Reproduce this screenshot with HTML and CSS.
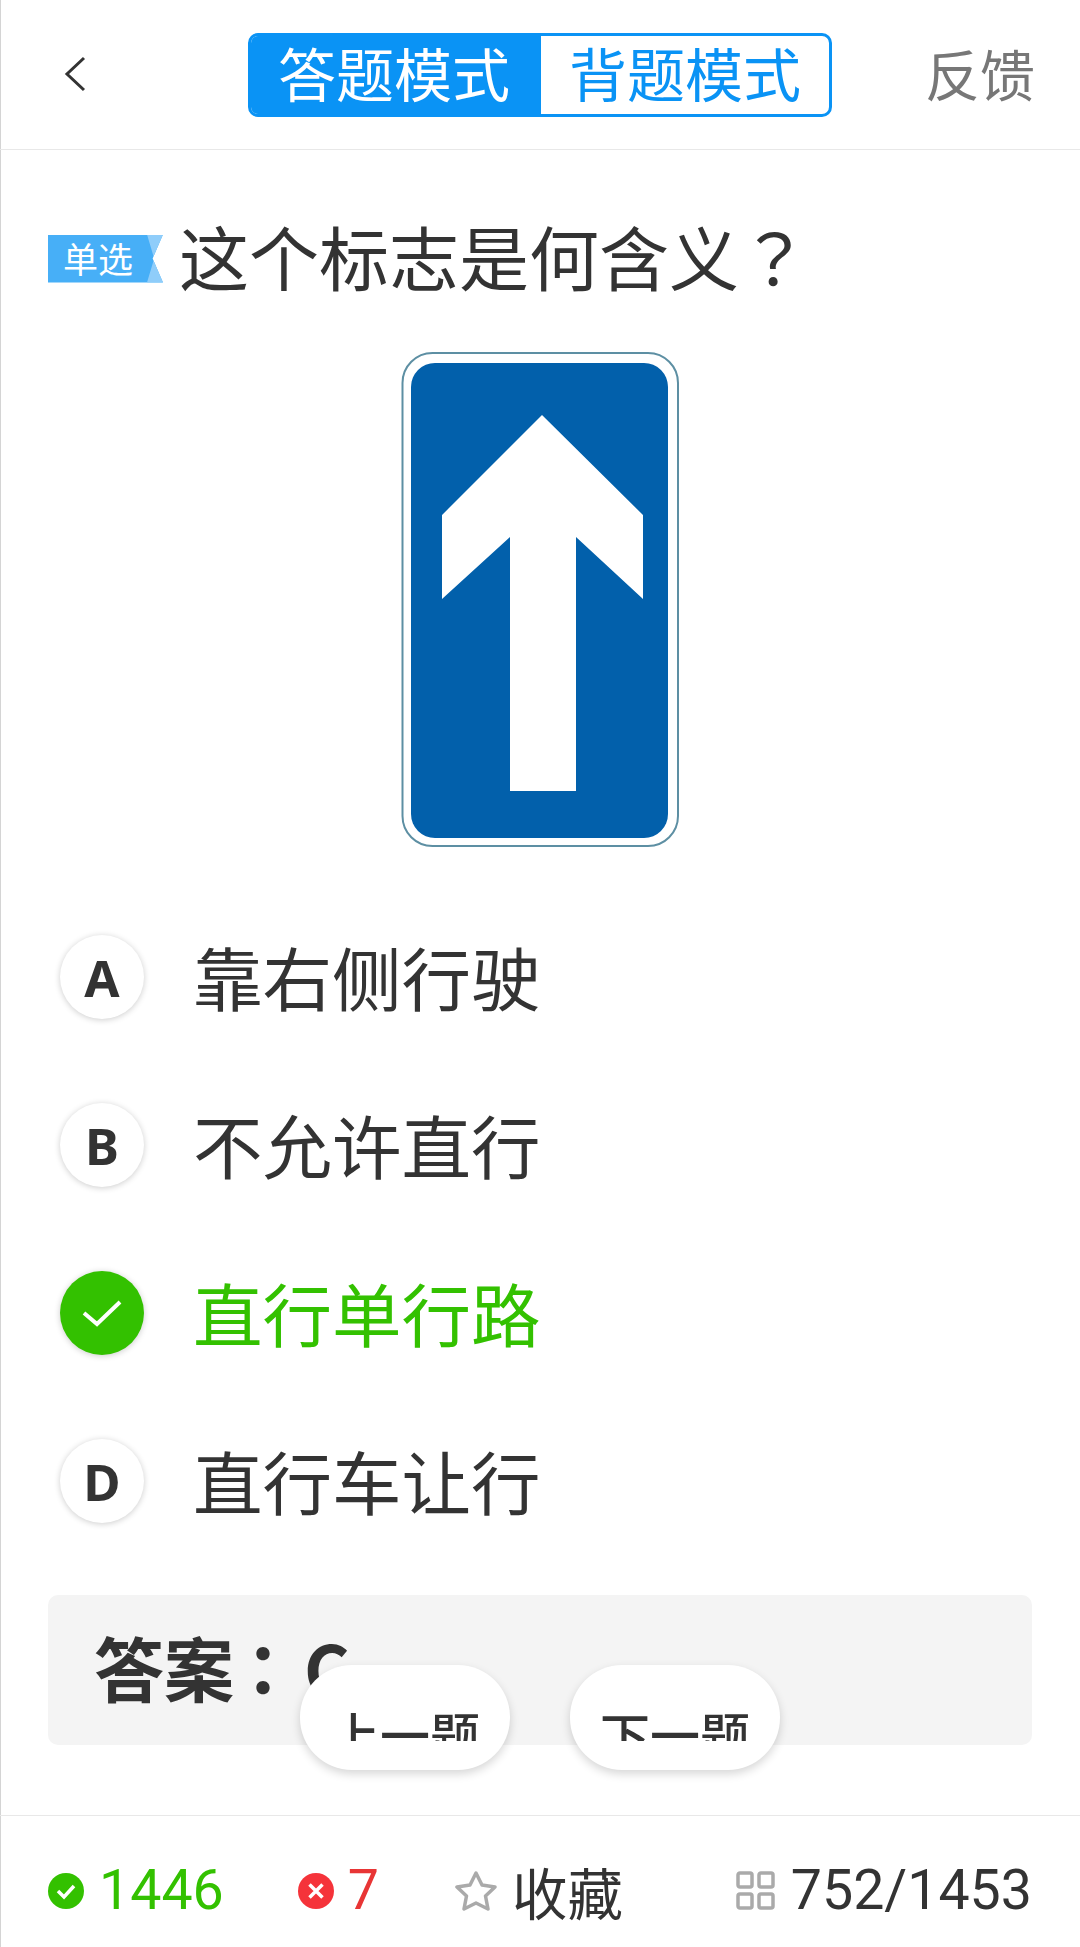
FILE: index.html
```html
<!DOCTYPE html>
<html lang="zh-CN">
<head>
    <meta charset="UTF-8">
    <meta name="viewport" content="width=device-width, initial-scale=1.0">
    <title>答题模式</title>
    <link rel="stylesheet" href="styles.css">
</head>
<body>
    <div class="page">
        <div class="topbar">
            <svg class="back" width="22" height="36" viewBox="0 0 22 36"><path d="M20 2 L3 18 L20 34" fill="none" stroke="#333" stroke-width="3"/></svg>
            <div class="modes">
                <div class="mode mode-on">答题模式</div>
                <div class="mode">背题模式</div>
            </div>
            <div class="feedback">反馈</div>
        </div>

        <div class="question">
            <span class="tag">单选</span>
            <span class="question-text">这个标志是何含义<span class="punct" lang="zh-TW">？</span></span>
        </div>

        <svg class="sign" width="290" height="510" viewBox="0 0 290 510">
            <rect x="7.5" y="8" width="275.5" height="493" rx="30" fill="#fff" stroke="#5d8fa3" stroke-width="2"/>
            <rect x="16" y="18" width="257" height="475" rx="24" fill="#0260ab"/>
            <path d="M147 70 L248 170 L248 254 L181 192 L181 446 L115 446 L115 192 L47 254 L47 170 Z" fill="#fff"/>
        </svg>

        <div class="options">
            <div class="option"><span class="letter">A</span><span class="option-text">靠右侧行驶</span></div>
            <div class="option"><span class="letter">B</span><span class="option-text">不允许直行</span></div>
            <div class="option option-right">
                <span class="letter">
                    <svg width="40" height="30" viewBox="0 0 40 30"><path d="M2 15 L15 26 L38 4" fill="none" stroke="#fff" stroke-width="4"/></svg>
                </span>
                <span class="option-text">直行单行路</span>
            </div>
            <div class="option"><span class="letter">D</span><span class="option-text">直行车让行</span></div>
        </div>

        <div class="answer">答案<span class="punct" lang="zh-TW">：</span>C</div>

        <div class="float-nav">
            <div class="float-btn"><span>上一题</span></div>
            <div class="float-btn"><span>下一题</span></div>
        </div>

        <div class="bottombar">
            <div class="stat stat-right">
                <svg width="36" height="36" viewBox="0 0 36 36"><circle cx="18" cy="18" r="18" fill="#33c100"/><path d="M10 18 L16 24 L26 13" fill="none" stroke="#fff" stroke-width="3.5"/></svg>
                <span>1446</span>
            </div>
            <div class="stat stat-wrong">
                <svg width="36" height="36" viewBox="0 0 36 36"><circle cx="18" cy="18" r="18" fill="#f5333a"/><path d="M11.5 11.5 L24.5 24.5 M24.5 11.5 L11.5 24.5" fill="none" stroke="#fff" stroke-width="3.5"/></svg>
                <span>7</span>
            </div>
            <div class="stat stat-fav">
                <svg width="42" height="40" viewBox="0 0 42 40"><path d="M21 2 L27 14 L40 16 L30.5 25 L33 38 L21 32 L9 38 L11.5 25 L2 16 L15 14 Z" fill="none" stroke="#aaa" stroke-width="3.5" stroke-linejoin="round"/></svg>
                <span>收藏</span>
            </div>
            <div class="stat stat-count">
                <svg width="39" height="39" viewBox="0 0 39 39" fill="none" stroke="#aaa" stroke-width="3.5"><rect x="2" y="2" width="14" height="14" rx="2"/><rect x="23" y="2" width="14" height="14" rx="2"/><rect x="2" y="23" width="14" height="14" rx="2"/><rect x="23" y="23" width="14" height="14" rx="2"/></svg>
                <span>752/1453</span>
            </div>
        </div>
    </div>
</body>
</html>
```
FILE: styles.css
```css
body {
    margin: 0;
    background-color: #fff;
    color: #333;
    font-family: "Noto Sans CJK SC", Roboto, sans-serif;
}
.page {
    position: relative;
    width: 1080px;
    height: 1947px;
    overflow: hidden;
    box-shadow: inset 1px 0 0 #d4d4d4;
}
/* TC punctuation sits in the middle of its cell */
.punct {
    font-family: "Noto Sans CJK TC", sans-serif;
}

/* top bar */
.topbar {
    display: flex;
    align-items: center;
    height: 149px;
    border-bottom: 1px solid #e8e8e8;
}
.back {
    margin-left: 64px;
    margin-top: -1px;
}
.modes {
    display: flex;
    box-sizing: border-box;
    width: 584px;
    height: 84px;
    margin-left: 162px;
    border: 3px solid #0a93f5;
    border-radius: 10px;
    font-size: 58px;
    line-height: 72px;
    text-align: center;
    color: #0a93f5;
}
.mode {
    flex: 1;
}
.mode-on {
    flex: 0 0 290px;
    box-sizing: border-box;
    padding-right: 4px;
    border-radius: 7px 0 0 7px;
    background-color: #0a93f5;
    color: #fff;
}
.feedback {
    margin-left: auto;
    margin-right: 45px;
    margin-bottom: 5px;
    font-size: 55px;
    color: #777;
}

/* question */
.question {
    display: flex;
    align-items: center;
    padding: 73px 48px 0;
    height: 69px;
}
.tag {
    position: relative;
    box-sizing: border-box;
    flex: 0 0 115px;
    height: 48px;
    margin-top: 2px;
    padding-left: 15px;
    background-color: #47aff7;
    clip-path: polygon(0 0, 100% 0, 91% 50%, 100% 100%, 0 100%);
    font-size: 35px;
    line-height: 46px;
    color: #fff;
}
.tag::after {
    content: "";
    position: absolute;
    top: 0;
    right: 0;
    width: 16px;
    height: 48px;
    background-color: #8fcdfa;
    clip-path: polygon(0 0, 100% 0, 100% 100%, 0 100%, 45% 50%);
}
.question-text {
    margin-left: 16px;
    margin-bottom: 5px;
    font-size: 70px;
    line-height: 69px;
    white-space: nowrap;
}

/* sign */
.sign {
    display: block;
    margin: 53px auto 0;
}

/* options */
.options {
    margin-top: 38px;
}
.option {
    display: flex;
    align-items: center;
    height: 168px;
    padding-left: 60px;
    font-size: 69.5px;
}
.option-text {
    margin-bottom: 4px;
}
.letter {
    display: flex;
    align-items: center;
    justify-content: center;
    width: 84px;
    height: 84px;
    margin-right: 49px;
    border-radius: 50%;
    background-color: #fff;
    box-shadow: 0 1px 6px rgba(0, 0, 0, 0.2);
    font-family: "Noto Sans", sans-serif;
    font-size: 51px;
    font-weight: 700;
}
.option-right {
    color: #33c100;
}
.option-right .letter {
    background-color: #33c100;
}

/* answer */
.answer {
    height: 150px;
    margin: 30px 48px 0;
    padding-left: 46px;
    border-radius: 10px;
    background-color: #f4f4f4;
    font-size: 70px;
    font-weight: 700;
    line-height: 143px;
}
.answer .punct {
    margin: 0 6px 0 -6px;
}

/* prev / next float over the answer */
.float-nav {
    position: absolute;
    left: 300px;
    top: 1665px;
    display: flex;
    gap: 60px;
}
.float-btn {
    display: flex;
    justify-content: center;
    width: 210px;
    height: 105px;
    padding-top: 42px;
    box-sizing: border-box;
    border-radius: 52px;
    background-color: #fff;
    box-shadow: 0 4px 10px rgba(0, 0, 0, 0.16);
    font-size: 50px;
    font-weight: 500;
}
.float-btn span {
    display: block;
    height: 34px;
    overflow: hidden;
    line-height: 52px;
}

/* bottom bar */
.bottombar {
    display: flex;
    align-items: center;
    height: 130px;
    margin-top: 70px;
    padding: 20px 48px 0;
    box-sizing: border-box;
    border-top: 1px solid #e8e8e8;
    font-family: Roboto, "Noto Sans CJK SC", sans-serif;
    font-size: 55.5px;
}
.stat {
    display: flex;
    align-items: center;
    gap: 16px;
}
.stat-right {
    gap: 15px;
    color: #33c100;
}
.stat-wrong {
    margin-left: 74px;
    gap: 14px;
    color: #e83535;
}
.stat-fav {
    margin-left: 76px;
    gap: 15px;
}
.stat-count {
    margin-left: auto;
}
```
